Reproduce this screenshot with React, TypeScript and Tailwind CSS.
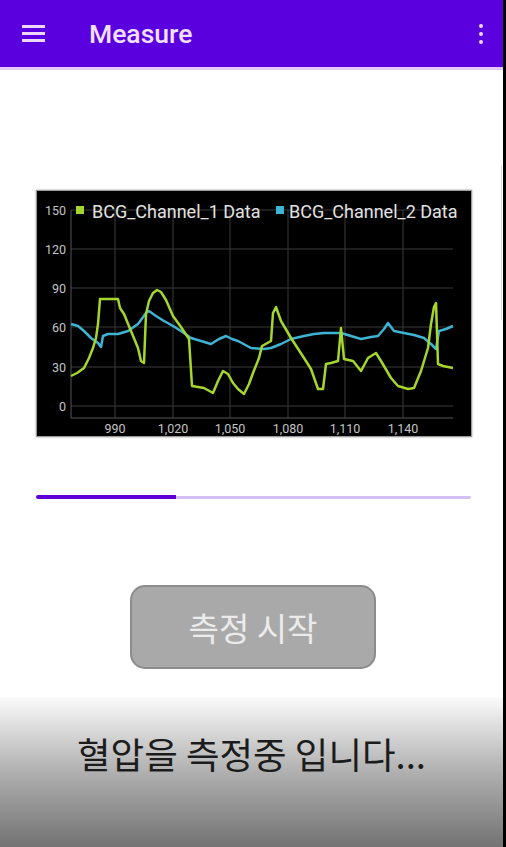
import React from "react";

const GREEN = [
  [70, 375], [76, 372], [83, 367], [88, 357], [92, 347], [95, 337], [97, 323], [99, 298],
  [117, 298], [119, 307], [123, 313], [130, 330], [137, 347], [140, 360], [143, 362],
  [145, 313], [148, 300], [152, 292], [156, 289], [160, 291], [165, 299], [172, 315],
  [180, 326], [188, 338], [191, 385], [203, 387], [212, 392], [217, 380], [222, 370],
  [227, 373], [232, 382], [237, 388], [243, 393], [248, 383], [252, 372], [258, 357],
  [261, 345], [270, 340], [272, 312], [275, 306], [280, 320], [290, 337], [303, 357],
  [310, 368], [317, 388], [322, 388], [325, 363], [330, 362], [337, 360], [340, 327],
  [343, 358], [352, 360], [360, 370], [367, 357], [375, 352], [380, 360], [390, 377],
  [397, 385], [407, 388], [413, 387], [420, 370], [427, 347], [430, 323], [433, 306],
  [435, 302], [437, 363], [442, 365], [452, 367],
];

const CYAN = [
  [70, 323], [77, 325], [83, 330], [90, 337], [97, 342], [100, 346], [102, 335], [107, 333],
  [117, 333], [127, 330], [137, 323], [145, 312], [148, 310], [155, 315], [163, 320],
  [172, 325], [180, 330], [190, 337], [200, 340], [210, 343], [218, 338], [225, 335],
  [231, 338], [237, 340], [250, 347], [263, 348], [270, 347], [280, 343], [290, 338],
  [303, 335], [313, 333], [323, 332], [340, 332], [350, 335], [360, 338], [370, 336],
  [377, 335], [383, 328], [387, 322], [393, 330], [403, 332], [413, 334], [423, 337],
  [430, 343], [435, 348], [438, 330], [445, 328], [452, 325],
];

const Y_TICKS = [
  { v: "150", y: 209 },
  { v: "120", y: 248 },
  { v: "90", y: 287 },
  { v: "60", y: 326 },
  { v: "30", y: 366 },
  { v: "0", y: 405 },
];

const X_TICKS = [
  { v: "990", x: 114 },
  { v: "1,020", x: 172 },
  { v: "1,050", x: 229 },
  { v: "1,080", x: 287 },
  { v: "1,110", x: 344 },
  { v: "1,140", x: 402 },
];

const toPoints = (pts: number[][]) => pts.map((p) => p.join(",")).join(" ");

const LineChart: React.FC = () => {
  return (
    <svg
      width={436}
      height={247}
      viewBox="36 190 436 247"
      className="block"
      fontFamily="Roboto, 'Noto Sans', sans-serif"
    >
      {/* grid */}
      {Y_TICKS.map((t) => (
        <line key={t.v} x1={70} x2={452} y1={t.y} y2={t.y} stroke="#3a3a3a" strokeWidth={1} />
      ))}
      {X_TICKS.map((t) => (
        <line key={t.v} x1={t.x} x2={t.x} y1={209} y2={417} stroke="#3a3a3a" strokeWidth={1} />
      ))}
      <line x1={70} x2={70} y1={209} y2={417} stroke="#555" strokeWidth={1} />
      <line x1={70} x2={452} y1={417} y2={417} stroke="#555" strokeWidth={1} />

      {/* axis labels */}
      {Y_TICKS.map((t) => (
        <text key={t.v} x={65} y={t.y + 4.5} textAnchor="end" fontSize={12.5} fill="#c4c4c4">
          {t.v}
        </text>
      ))}
      {X_TICKS.map((t) => (
        <text key={t.v} x={t.x} y={432} textAnchor="middle" fontSize={12.5} fill="#c4c4c4">
          {t.v}
        </text>
      ))}

      {/* data */}
      <polyline points={toPoints(CYAN)} fill="none" stroke="#3eb3d3" strokeWidth={2.5} strokeLinejoin="round" />
      <polyline points={toPoints(GREEN)} fill="none" stroke="#a6d62c" strokeWidth={2.5} strokeLinejoin="round" />

      {/* legend */}
      <rect x={75} y={205} width={8} height={8} fill="#a6d62c" />
      <text x={91} y={216.5} fontSize={18} fill="#e2e2e2">
        BCG_Channel_1 Data
      </text>
      <rect x={275} y={205} width={8} height={8} fill="#3eb3d3" />
      <text x={288} y={216.5} fontSize={18} fill="#e2e2e2">
        BCG_Channel_2 Data
      </text>
    </svg>
  );
};

export default function App() {
  return (
    <div className="w-[506px] h-[847px] flex bg-black overflow-hidden">
      <div className="w-[503px] h-full flex flex-col bg-white relative">
        {/* app bar */}
        <header className="h-[70px] shrink-0 bg-[#5a00df] border-b-[3px] border-[#e4c8ff] flex items-center pl-[22px] pr-[20px]">
          <div className="flex flex-col gap-[4px] w-[23px]">
            <span className="block h-[3px] bg-[#eed8ff]" />
            <span className="block h-[3px] bg-[#eed8ff]" />
            <span className="block h-[3px] bg-[#eed8ff]" />
          </div>
          <h1 className="ml-[44px] mt-[2px] text-[26.5px] font-medium text-[#f2e0ff] font-['Roboto',sans-serif] leading-none">
            Measure
          </h1>
          <div className="ml-auto flex flex-col gap-[4px] items-center">
            <span className="block w-[4px] h-[4px] rounded-full bg-[#eed8ff]" />
            <span className="block w-[4px] h-[4px] rounded-full bg-[#eed8ff]" />
            <span className="block w-[4px] h-[4px] rounded-full bg-[#eed8ff]" />
          </div>
        </header>

        {/* scroll hint */}
        <div className="absolute right-[1px] top-[165px] w-[1px] h-[155px] bg-[#d8d8d8]" />

        {/* chart */}
        <div className="mt-[120px] ml-[36px] w-[436px] h-[247px] bg-black border border-[#9a9a9a] shadow-[0_0_2px_rgba(0,0,0,0.4)] overflow-hidden">
          <LineChart />
        </div>

        {/* progress */}
        <div className="mt-[58px] ml-[36px] w-[435px] h-[4px] flex items-center">
          <div className="w-[140px] h-[4px] bg-[#5c00d6] rounded-l-full" />
          <div className="flex-1 h-[3px] bg-[#d2c0f4] rounded-r-full" />
        </div>

        {/* start button */}
        <div className="mt-[86px] ml-[130px]">
          <button className="w-[246px] h-[84px] rounded-[15px] bg-[#a9a9a9] border-2 border-[#8c8c8c] flex items-center justify-center text-[33px] text-[#ebebeb] font-['Noto_Sans_CJK_KR',sans-serif] leading-none">
            측정 시작
          </button>
        </div>

        {/* status */}
        <div className="mt-auto h-[150px] bg-gradient-to-b from-[#fbfbfb] via-[#b0b0b0] to-[#737373] flex justify-center pt-[39px]">
          <p className="text-[36.5px] text-[#1c1c1c] font-['Noto_Sans_CJK_KR',sans-serif] leading-none">
            혈압을 측정중 입니다...
          </p>
        </div>
      </div>
    </div>
  );
}
